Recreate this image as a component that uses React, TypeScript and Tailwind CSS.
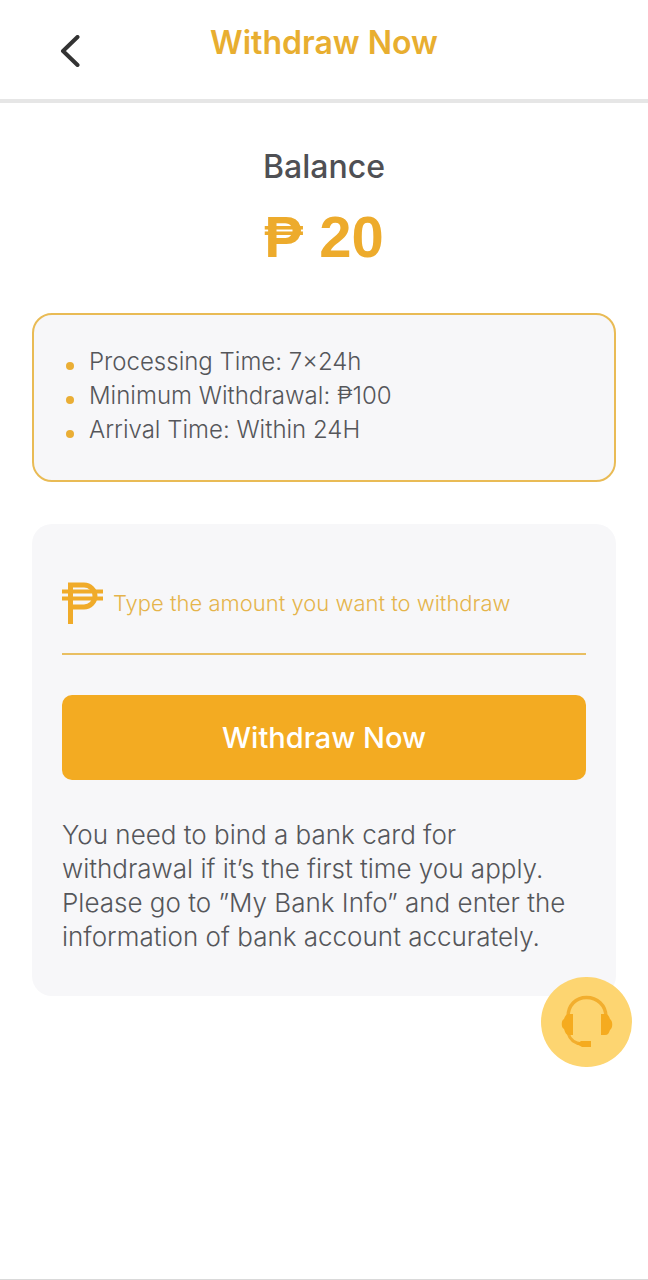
import { useState } from 'react';
import type { FormEvent } from 'react';

const notes = [
  { label: 'Processing Time:', value: '7×24h' },
  { label: 'Minimum Withdrawal:', value: '₱100' },
  { label: 'Arrival Time:', value: 'Within 24H' },
];

const BackIcon = () => (
  <svg viewBox="0 0 20 32" className="w-5 h-8" fill="none" stroke="#333333" strokeWidth="4" strokeLinecap="round" strokeLinejoin="round" aria-hidden="true">
    <path d="M17.5 2 3 16 17.5 30" />
  </svg>
);

const PesoIcon = () => (
  <svg viewBox="0 0 41 42" className="w-[41px] h-[42px] shrink-0" fill="none" stroke="#f0ab2a" aria-hidden="true">
    <path d="M8.5 42V3H22a11 11 0 0 1 0 22H8.5" strokeWidth="5" />
    <path d="M0 9.5h41M0 16.5h41" strokeWidth="4" />
  </svg>
);

const HeadsetIcon = () => (
  <svg viewBox="0 0 52 54" className="w-[52px] h-[54px]" fill="none" aria-hidden="true">
    <path d="M7 22C7 10 15 2.5 25.5 2.5S45 10 45 22" stroke="#f2ae2e" strokeWidth="3.5" />
    <path d="M7 38c2 7 7 10.5 14 11" stroke="#f2ae2e" strokeWidth="3" />
    <path d="M12 19v21H8c-3 0-4-3-5-6-3-1-3-9 0-10 1-3 2-5 5-5z" fill="#f5ab1f" />
    <path d="M40 19v21h4c3 0 4-2 5-5 3-2 3-9 0-11-1-3-2-5-5-5z" fill="#f5ab1f" />
    <path d="M20 46h10v6H21l-5-3z" fill="#f5ab1f" />
  </svg>
);

export default function App() {
  const [amount, setAmount] = useState('');

  const handleSubmit = (e: FormEvent) => {
    e.preventDefault();
  };

  return (
    <div className="min-h-screen bg-white border-b border-[#d9d9d9] font-['Inter',sans-serif] text-[#55565a]">
      {/* Header */}
      <header className="grid grid-cols-[80px_1fr_80px] items-start border-b-4 border-[#e6e6e6] pt-6 pb-8">
        <button type="button" aria-label="Go back" className="justify-self-end pt-[11px]">
          <BackIcon />
        </button>
        <h1 className="text-center text-[32px] leading-[38px] font-semibold text-[#e8ae30]">Withdraw Now</h1>
      </header>

      <main className="px-8 pt-11">
        {/* Balance */}
        <section className="text-center">
          <h2 className="text-[32px] leading-10 font-medium text-[#4f5054]">Balance</h2>
          <p className="mt-3 text-[58px] leading-[76px] font-bold font-['Liberation_Sans',sans-serif] text-[#edab2c]">₱ 20</p>
        </section>

        {/* Withdrawal rules */}
        <ul className="mt-[38px] rounded-[20px] border-2 border-[#e9bb55] bg-[#f7f7f9] px-8 pt-[30px] pb-[33px] text-2xl leading-[34px] font-light">
          {notes.map((note) => (
            <li key={note.label} className="flex items-center gap-[15px]">
              <span className="mt-2 w-2 h-2 shrink-0 rounded-full bg-[#eaae35]" />
              <span>
                {note.label} {note.value}
              </span>
            </li>
          ))}
        </ul>

        {/* Withdraw form */}
        <form onSubmit={handleSubmit} className="mt-[42px] rounded-[20px] bg-[#f7f7f9] px-[30px] pt-[58px] pb-[42px]">
          <div className="flex items-center gap-[10px] border-b-2 border-[#e9bf62] pb-[29px]">
            <PesoIcon />
            <input
              type="text"
              inputMode="decimal"
              aria-label="Withdrawal amount"
              placeholder="Type the amount you want to withdraw"
              value={amount}
              onChange={(e) => setAmount(e.target.value)}
              className="min-w-0 flex-1 bg-transparent text-[22px] leading-8 font-light text-[#e5b44b] outline-none placeholder:text-[#e5b44b]"
            />
          </div>
          <button type="submit" className="mt-10 w-full h-[85px] rounded-[10px] bg-[#f3ab22] text-[29px] font-medium text-white">
            Withdraw Now
          </button>
          <p className="mt-[38px] text-[26px] leading-[34px] font-light">
            You need to bind a bank card for withdrawal if it’s the first time you apply. Please go to ”My Bank Info” and enter the information of bank account accurately.
          </p>
        </form>
      </main>

      {/* Customer service */}
      <button
        type="button"
        aria-label="Customer service"
        className="fixed right-4 bottom-[213px] flex items-center justify-center w-[91px] h-[90px] rounded-full bg-[#fdd571]"
      >
        <HeadsetIcon />
      </button>
    </div>
  );
}
